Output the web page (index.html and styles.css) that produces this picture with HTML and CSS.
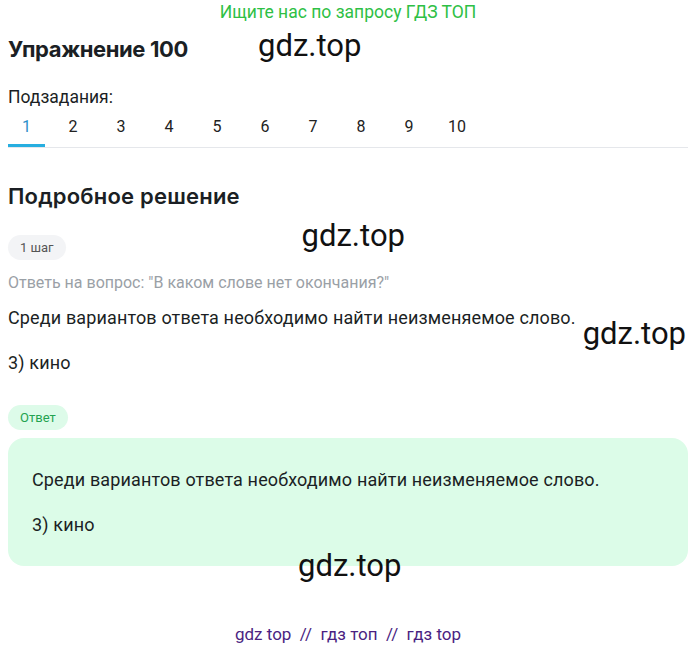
FILE: index.html
```html
<!DOCTYPE html>
<html lang="ru">
<head>
<meta charset="utf-8">
<link rel="stylesheet" href="styles.css">
</head>
<body>
<div class="page">
  <div class="promo">Ищите нас по запросу ГДЗ ТОП</div>
  <div class="title-row">
    <h1 class="title">Упражнение 100</h1>
    <span class="wm wm-title">gdz.top</span>
  </div>
  <div class="sub-label">Подзадания:</div>
  <nav class="tabs">
    <span class="tab active">1</span>
    <span class="tab">2</span>
    <span class="tab">3</span>
    <span class="tab">4</span>
    <span class="tab">5</span>
    <span class="tab">6</span>
    <span class="tab">7</span>
    <span class="tab">8</span>
    <span class="tab">9</span>
    <span class="tab">10</span>
  </nav>
  <h2 class="section">Подробное решение</h2>
  <div class="step-row">
    <span class="pill pill-gray">1 шаг</span>
    <span class="wm wm-step">gdz.top</span>
  </div>
  <p class="question">Ответь на вопрос: "В каком слове нет окончания?"</p>
  <div class="text-row">
    <p class="text">Среди вариантов ответа необходимо найти неизменяемое слово.</p>
    <span class="wm wm-side">gdz.top</span>
  </div>
  <p class="text answer-line">3) кино</p>
  <span class="pill pill-green">Ответ</span>
  <div class="answer-box">
    <p class="text">Среди вариантов ответа необходимо найти неизменяемое слово.</p>
    <p class="text box-second">3) кино</p>
    <span class="wm wm-box">gdz.top</span>
  </div>
  <div class="footer">gdz top &nbsp;//&nbsp; гдз топ &nbsp;//&nbsp; гдз top</div>
</div>
</body>
</html>
```
FILE: styles.css
```css
* { box-sizing: border-box; }
html, body { margin: 0; padding: 0; background: #fff; }
body { font-family: Roboto, "Noto Sans", sans-serif; color: #1b1f24; }
.page { padding: 0 12px 0 8px; width: 700px; }
.promo { text-align: center; color: #2ec045; font-size: 17.5px; line-height: 22px; padding-top: 1px; }
.title-row { display: flex; align-items: center; height: 52px; }
.title { margin: 0; font-family: Inter, Roboto, sans-serif; font-weight: 700; font-size: 22px; letter-spacing: -0.4px; width: 250px; }
.wm { font-family: Roboto, sans-serif; color: #111; font-size: 31px; line-height: 36px; }
.wm-title { margin-top: -6px; }
.sub-label { font-size: 17.5px; margin-top: 11px; line-height: 22px; }
.tabs { display: flex; border-bottom: 1px solid #e5e7eb; margin-top: 7px; height: 33px; }
.tab { width: 48px; text-align: center; font-size: 16px; line-height: 24px; color: #222; }
.tab.active { color: #2b8fc9; border-bottom: 3px solid #27aee0; width: 37px; margin-right: 4px; }
.section { font-family: Inter, Roboto, sans-serif; font-weight: 600; font-size: 22px; margin: 34px 0 0; line-height: 28px; letter-spacing: 0.2px; }
.step-row { display: flex; align-items: flex-start; margin-top: 14px; height: 34px; }
.pill { display: inline-block; border-radius: 14px; font-size: 13px; line-height: 25px; padding: 0 12px; }
.pill-gray { background: #f3f4f6; color: #555; margin-top: 11px; }
.wm-step { margin-left: 236px; margin-top: -6px; }
.question { color: #9aa0a6; font-size: 16px; margin: 14px 0 0; line-height: 22px; }
.text-row { display: flex; align-items: flex-start; margin-top: 13px; height: 22px; }
.text { font-size: 18px; letter-spacing: 0.14px; line-height: 22px; margin: 0; color: #1b1f24; }
.wm-side { margin-left: 7px; margin-top: 9px; }
.answer-line { margin-top: 23px; }
.pill-green { background: #ddfbe9; color: #23a350; margin-top: 31px; }
.answer-box { position: relative; background: #dcfce8; border-radius: 16px; margin-top: 8px; padding: 31px 24px 32px; height: 128px; width: 680px; }
.box-second { margin-top: 23px; }
.wm-box { position: absolute; left: 290px; top: 110px; }
.footer { text-align: center; color: #4b1f82; font-size: 17px; margin-top: 58px; }
```
